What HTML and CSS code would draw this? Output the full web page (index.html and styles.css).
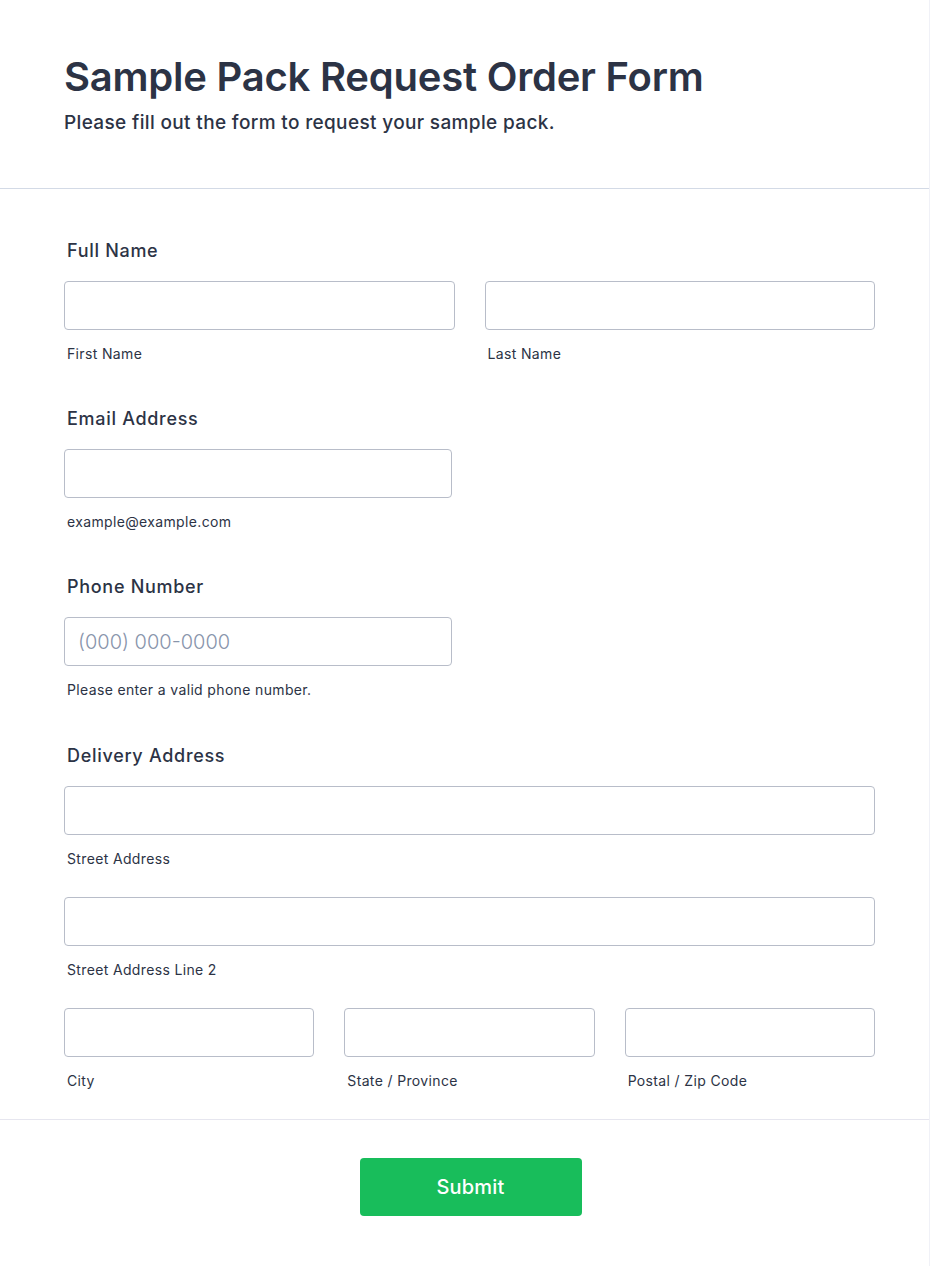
FILE: index.html
```html
<!DOCTYPE html>
<html lang="en">
<head>
<meta charset="utf-8">
<title>Sample Pack Request Order Form</title>
<link rel="stylesheet" href="styles.css">
</head>
<body>
<div class="page">
  <header class="form-header">
    <h1 class="title">Sample Pack Request Order Form</h1>
    <p class="subtitle">Please fill out the form to request your sample pack.</p>
  </header>
  <form class="form-body">
    <div class="field">
      <label class="label">Full Name</label>
      <div class="cols-2">
        <div class="sub">
          <input class="input" type="text">
          <span class="sublabel">First Name</span>
        </div>
        <div class="sub">
          <input class="input" type="text">
          <span class="sublabel">Last Name</span>
        </div>
      </div>
    </div>
    <div class="field">
      <label class="label">Email Address</label>
      <div class="sub half">
        <input class="input" type="email">
        <span class="sublabel">example@example.com</span>
      </div>
    </div>
    <div class="field">
      <label class="label">Phone Number</label>
      <div class="sub half">
        <input class="input" type="tel" placeholder="(000) 000-0000">
        <span class="sublabel">Please enter a valid phone number.</span>
      </div>
    </div>
    <div class="field field-address">
      <label class="label">Delivery Address</label>
      <div class="address">
        <div class="sub">
          <input class="input" type="text">
          <span class="sublabel">Street Address</span>
        </div>
        <div class="sub">
          <input class="input" type="text">
          <span class="sublabel">Street Address Line 2</span>
        </div>
        <div class="cols-3">
          <div class="sub">
            <input class="input" type="text">
            <span class="sublabel">City</span>
          </div>
          <div class="sub">
            <input class="input" type="text">
            <span class="sublabel">State / Province</span>
          </div>
          <div class="sub">
            <input class="input" type="text">
            <span class="sublabel">Postal / Zip Code</span>
          </div>
        </div>
      </div>
    </div>
  </form>
  <footer class="form-footer">
    <button class="submit" type="button">Submit</button>
  </footer>
</div>
</body>
</html>
```

FILE: styles.css
```css
* { box-sizing: border-box; }

html, body {
  margin: 0;
  padding: 0;
  background: #ffffff;
}

body {
  font-family: Inter, "Noto Sans", "Liberation Sans", sans-serif;
  color: #2c3345;
}

.page {
  width: 930px;
  min-height: 1266px;
  border-right: 1px solid #f0f1f7;
  background: #ffffff;
}

.form-header {
  padding: 52px 54px 53px 64px;
  border-bottom: 1px solid #d3dae6;
}

.title {
  margin: 0;
  font-size: 40px;
  line-height: 49px;
  font-weight: 600;
  letter-spacing: -0.23px;
  color: #2c3345;
}

.subtitle {
  margin: 10px 0 0;
  font-size: 19px;
  line-height: 24px;
  font-weight: 500;
  letter-spacing: 0.35px;
  color: #2c3345;
}

.form-body {
  padding: 50px 54px 28px 64px;
  display: flex;
  flex-direction: column;
  gap: 43px;
}

.field {
  display: flex;
  flex-direction: column;
  gap: 18px;
}

.field-address {
  margin-top: 1px;
}

.label {
  padding-left: 3px;
  font-size: 18px;
  line-height: 24px;
  font-weight: 500;
  letter-spacing: 0.7px;
  color: #2c3345;
}

.cols-2 {
  display: grid;
  grid-template-columns: 1fr 1fr;
  gap: 30px;
}

.cols-3 {
  display: grid;
  grid-template-columns: 1fr 1fr 1fr;
  gap: 30px;
}

.address {
  display: flex;
  flex-direction: column;
  gap: 28px;
}

.sub {
  display: flex;
  flex-direction: column;
  gap: 14px;
}

.half {
  width: 388px;
}

.input {
  display: block;
  width: 100%;
  height: 49px;
  margin: 0;
  padding: 0 13px;
  border: 1px solid #b8bdc9;
  border-radius: 4px;
  background: #ffffff;
  font-family: Inter, "Noto Sans", "Liberation Sans", sans-serif;
  font-size: 20px;
  font-weight: 300;
  color: #2c3345;
  outline: none;
}

.input::placeholder {
  color: #8894ab;
  opacity: 1;
}

.sublabel {
  padding-left: 3px;
  font-size: 14px;
  line-height: 20px;
  font-weight: 400;
  letter-spacing: 0.35px;
  color: #2c3345;
}

.form-footer {
  border-top: 1px solid #e6e6ef;
  padding: 38px 0 50px 12px;
  display: flex;
  justify-content: center;
}

.submit {
  width: 222px;
  height: 58px;
  border: none;
  border-radius: 4px;
  background: #18bd5b;
  color: #ffffff;
  font-family: Inter, "Noto Sans", "Liberation Sans", sans-serif;
  font-size: 20px;
  font-weight: 500;
  letter-spacing: 0.2px;
  cursor: pointer;
}
```
